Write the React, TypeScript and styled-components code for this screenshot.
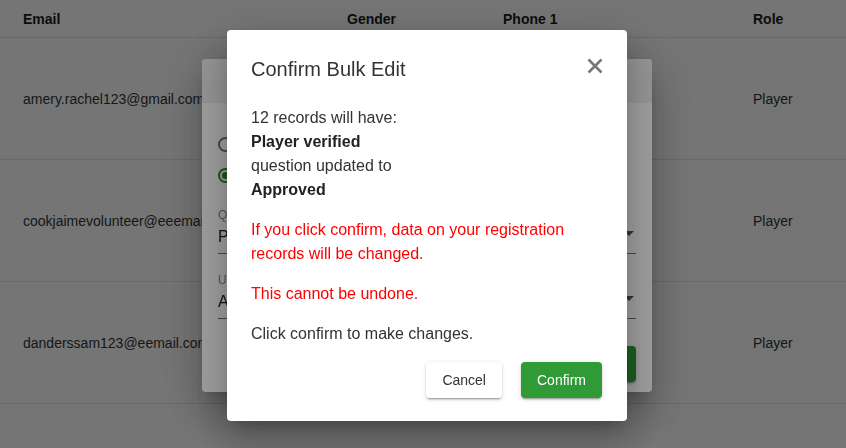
import React from "react";
import styled, { createGlobalStyle } from "styled-components";

const Global = createGlobalStyle`
  html, body { margin: 0; padding: 0; background: #ffffff; }
  body { font-family: "Liberation Sans", Arial, sans-serif; color: #222; overflow: hidden; }
  * { box-sizing: border-box; }
`;

const Table = styled.div`
  width: 846px;
  display: flex;
  flex-direction: column;
`;

const Row = styled.div<{ $head?: boolean }>`
  display: grid;
  grid-template-columns: 324px 156px 250px 1fr;
  align-items: center;
  padding-left: 23px;
  height: ${(p) => (p.$head ? "38px" : "122px")};
  border-bottom: 1px solid #e4e4e4;
  font-size: 14px;
  font-weight: ${(p) => (p.$head ? 700 : 400)};
  color: ${(p) => (p.$head ? "#1a1a1a" : "#333")};
  white-space: nowrap;
`;

const Cell = styled.div`
  overflow: hidden;
`;

const Backdrop = styled.div<{ $alpha: number }>`
  position: fixed;
  inset: 0;
  background: rgba(0, 0, 0, ${(p) => p.$alpha});
  display: flex;
  align-items: center;
  justify-content: center;
  padding-left: 8px;
  padding-top: 3px;
`;

const BackDialog = styled.div`
  width: 450px;
  height: 333px;
  background: #fff;
  border-radius: 4px;
  display: flex;
  flex-direction: column;
  overflow: hidden;
  box-shadow: 0 11px 15px -7px rgba(0,0,0,0.2), 0 24px 38px 3px rgba(0,0,0,0.14), 0 9px 46px 8px rgba(0,0,0,0.12);
`;

const BackHeader = styled.div`
  height: 44px;
  background: #efefef;
`;

const BackBody = styled.div`
  flex: 1;
  padding: 26px 16px 10px 16px;
  display: flex;
  flex-direction: column;
`;

const RadioRow = styled.div`
  display: flex;
  align-items: center;
  height: 31px;
`;

const RadioCircle = styled.span<{ $on?: boolean }>`
  width: 15px;
  height: 15px;
  border-radius: 50%;
  border: 2px solid ${(p) => (p.$on ? "#2e8b36" : "#777")};
  display: flex;
  align-items: center;
  justify-content: center;
  &::after {
    content: "";
    width: 7px;
    height: 7px;
    border-radius: 50%;
    background: ${(p) => (p.$on ? "#2e8b36" : "transparent")};
  }
`;

const Field = styled.div<{ $gap: number }>`
  margin-top: ${(p) => p.$gap}px;
  display: flex;
  flex-direction: column;
  border-bottom: 1px solid #777;
  padding-bottom: 4px;
  position: relative;
`;

const FieldLabel = styled.div`
  font-size: 12px;
  color: #888;
  line-height: 16px;
`;

const FieldValue = styled.div`
  font-size: 16px;
  color: #222;
  line-height: 24px;
  margin-top: 2px;
`;

const Caret = styled.span`
  position: absolute;
  right: 2px;
  top: 24px;
  width: 0;
  height: 0;
  border-left: 5px solid transparent;
  border-right: 5px solid transparent;
  border-top: 5px solid #555;
`;

const BackFooter = styled.div`
  display: flex;
  justify-content: flex-end;
  padding: 0 16px 10px;
`;

const GreenButton = styled.button<{ $wide?: boolean }>`
  height: 36px;
  padding: 0 16px;
  border: none;
  border-radius: 4px;
  background: #309a36;
  color: #fff;
  font-family: "Liberation Sans", Arial, sans-serif;
  font-size: 14px;
  font-weight: 500;
  box-shadow: 0 3px 1px -2px rgba(0,0,0,0.2), 0 2px 2px 0 rgba(0,0,0,0.14), 0 1px 5px 0 rgba(0,0,0,0.12);
  min-width: ${(p) => (p.$wide ? "56px" : "auto")};
`;

const Dialog = styled.div`
  width: 400px;
  height: 391px;
  background: #fff;
  border-radius: 4px;
  display: flex;
  flex-direction: column;
  box-shadow: 0 11px 15px -7px rgba(0,0,0,0.2), 0 24px 38px 3px rgba(0,0,0,0.14), 0 9px 46px 8px rgba(0,0,0,0.12);
`;

const Header = styled.div`
  display: flex;
  align-items: center;
  justify-content: space-between;
  padding: 24px 24px 0 24px;
  height: 54px;
`;

const Title = styled.h2`
  margin: 0;
  font-size: 20px;
  font-weight: 400;
  line-height: 30px;
  color: #333;
`;

const Close = styled.button`
  border: none;
  background: none;
  padding: 0;
  width: 16px;
  height: 16px;
  margin-top: -6px;
  display: flex;
  align-items: center;
  justify-content: center;
  color: #777;
`;

const Body = styled.div`
  padding: 22px 24px 0 24px;
  font-size: 16px;
  line-height: 24px;
  color: #333;
`;

const Para = styled.p<{ $danger?: boolean }>`
  margin: 0 0 16px 0;
  color: ${(p) => (p.$danger ? "#ff0000" : "#333")};
`;

const Strong = styled.div`
  font-weight: 700;
  color: #222;
`;

const Footer = styled.div`
  display: flex;
  justify-content: flex-end;
  gap: 19px;
  padding: 0 25px 0 24px;
  margin-top: auto;
  margin-bottom: 23px;
`;

const CancelButton = styled.button`
  height: 36px;
  padding: 0 16px;
  border: none;
  border-radius: 4px;
  background: #fff;
  color: #333;
  font-family: "Liberation Sans", Arial, sans-serif;
  font-size: 14px;
  box-shadow: 0 3px 1px -2px rgba(0,0,0,0.2), 0 2px 2px 0 rgba(0,0,0,0.14), 0 1px 5px 0 rgba(0,0,0,0.12);
`;

const rows = [
  { email: "amery.rachel123@gmail.com", role: "Player" },
  { email: "cookjaimevolunteer@eeemail.com", role: "Player" },
  { email: "danderssam123@eemail.com", role: "Player" },
];

export default function App() {
  return (
    <>
      <Global />
      <Table>
        <Row $head>
          <Cell>Email</Cell>
          <Cell>Gender</Cell>
          <Cell>Phone 1</Cell>
          <Cell>Role</Cell>
        </Row>
        {rows.map((r) => (
          <Row key={r.email}>
            <Cell>{r.email}</Cell>
            <Cell />
            <Cell />
            <Cell>{r.role}</Cell>
          </Row>
        ))}
      </Table>

      <Backdrop $alpha={0.28}>
        <BackDialog>
          <BackHeader />
          <BackBody>
            <RadioRow>
              <RadioCircle />
            </RadioRow>
            <RadioRow>
              <RadioCircle $on />
            </RadioRow>
            <Field $gap={16}>
              <FieldLabel>Question</FieldLabel>
              <FieldValue>Player verified</FieldValue>
              <Caret />
            </Field>
            <Field $gap={18}>
              <FieldLabel>Update to</FieldLabel>
              <FieldValue>Approved</FieldValue>
              <Caret />
            </Field>
          </BackBody>
          <BackFooter>
            <GreenButton $wide>Save</GreenButton>
          </BackFooter>
        </BackDialog>
      </Backdrop>

      <Backdrop $alpha={0.37}>
        <Dialog>
          <Header>
            <Title>Confirm Bulk Edit</Title>
            <Close aria-label="close">
              <svg width="16" height="16" viewBox="0 0 16 16">
                <path d="M1.5 1.5 L14.5 14.5 M14.5 1.5 L1.5 14.5" stroke="currentColor" strokeWidth="2.6" strokeLinecap="butt" />
              </svg>
            </Close>
          </Header>
          <Body>
            <Para>
              12 records will have:
              <Strong>Player verified</Strong>
              question updated to
              <Strong>Approved</Strong>
            </Para>
            <Para $danger>If you click confirm, data on your registration records will be changed.</Para>
            <Para $danger>This cannot be undone.</Para>
            <Para>Click confirm to make changes.</Para>
          </Body>
          <Footer>
            <CancelButton>Cancel</CancelButton>
            <GreenButton>Confirm</GreenButton>
          </Footer>
        </Dialog>
      </Backdrop>
    </>
  );
}
